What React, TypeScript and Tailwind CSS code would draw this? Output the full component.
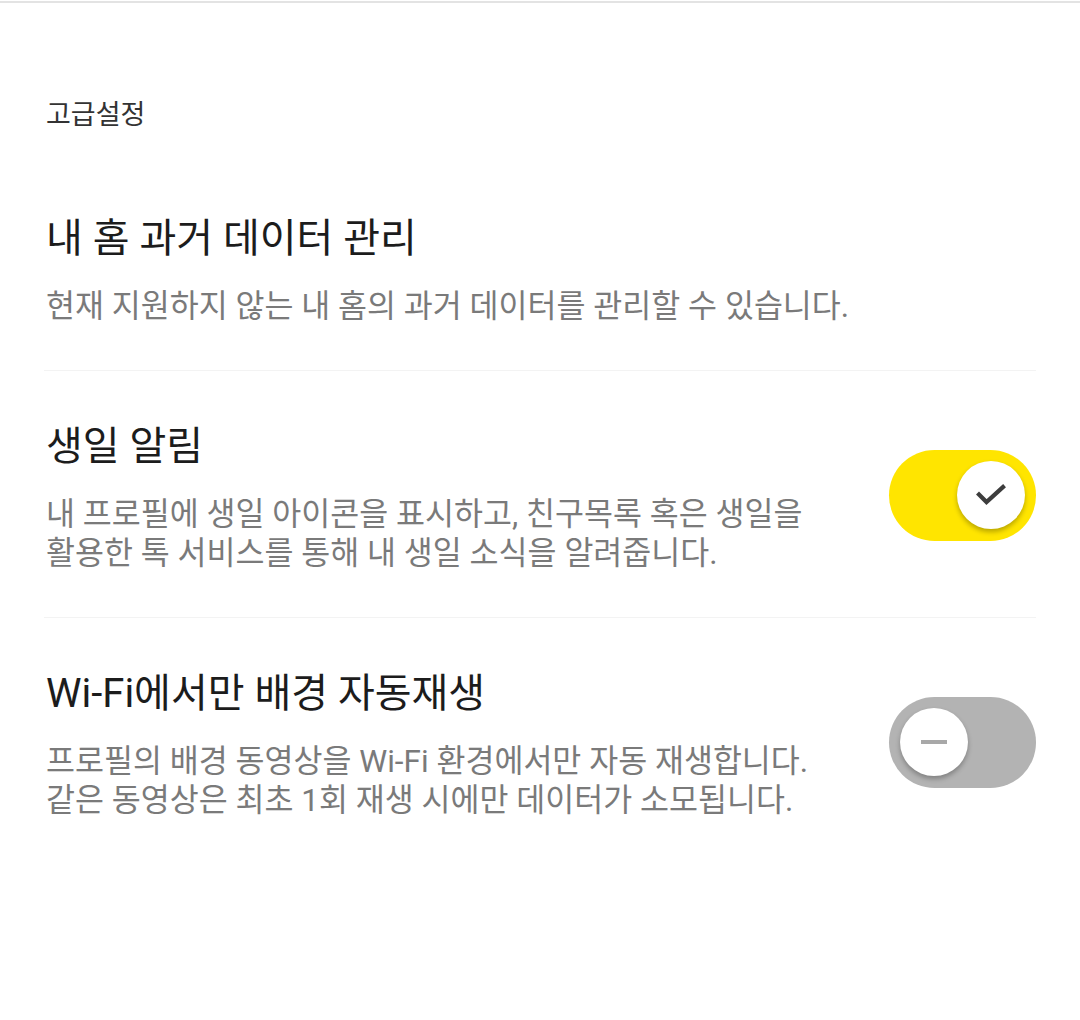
import React, { useState } from 'react';

const font = { fontFamily: '"Roboto", "Noto Sans CJK KR", sans-serif' };

interface ToggleProps {
  on: boolean;
  onChange: () => void;
}

const Toggle: React.FC<ToggleProps> = ({ on, onChange }) => (
  <button
    onClick={onChange}
    className={`relative shrink-0 w-[147px] h-[91px] rounded-full flex items-center px-[11px] mb-[8px] ${
      on ? 'bg-[#ffe500] justify-end' : 'bg-[#b3b3b3] justify-start'
    }`}
  >
    <span className="w-[68px] h-[68px] rounded-full bg-white shadow-[0_3px_5px_rgba(0,0,0,0.28)] flex items-center justify-center">
      {on ? (
        <svg width="30" height="22" viewBox="0 0 30 22" fill="none">
          <path d="M3 10.5 L10.5 18 L27 3" stroke="#3d3d3d" strokeWidth="4.2" strokeLinecap="square" />
        </svg>
      ) : (
        <span className="block w-[26px] h-[4px] bg-[#a8a8a8]" />
      )}
    </span>
  </button>
);

interface ItemProps {
  title: string;
  lines: string[];
  toggle?: { on: boolean; onChange: () => void };
  divider?: boolean;
  first?: boolean;
}

const Item: React.FC<ItemProps> = ({ title, lines, toggle, divider, first }) => (
  <div className={`mx-[44px] ${divider ? 'border-b border-[#f3f3f3]' : ''}`}>
    <div className={`flex items-center justify-between pl-[2px] pb-[44px] ${first ? 'pt-0' : 'pt-[54px]'}`}>
      <div className="flex flex-col">
        <div className="text-[40px] leading-[44px] text-[#1c1c1c] whitespace-nowrap">{title}</div>
        <div className="mt-[26px] text-[31.5px] leading-[39px] text-[#7a7a7a]">
          {lines.map((l) => (
            <div key={l} className="whitespace-nowrap">{l}</div>
          ))}
        </div>
      </div>
      {toggle && <Toggle on={toggle.on} onChange={toggle.onChange} />}
    </div>
  </div>
);

export default function App() {
  const [birthday, setBirthday] = useState(true);
  const [wifi, setWifi] = useState(false);

  return (
    <div className="w-[1080px] min-h-[1020px] bg-white pt-[1px]" style={font}>
      <div className="h-[2px] bg-[#e3e3e3]" />
      <div className="px-[46px] pt-[94px] pb-[84px] text-[27px] leading-[36px] text-[#333333]">고급설정</div>

      <Item
        first
        divider
        title="내 홈 과거 데이터 관리"
        lines={['현재 지원하지 않는 내 홈의 과거 데이터를 관리할 수 있습니다.']}
      />
      <Item
        divider
        title="생일 알림"
        lines={['내 프로필에 생일 아이콘을 표시하고, 친구목록 혹은 생일을', '활용한 톡 서비스를 통해 내 생일 소식을 알려줍니다.']}
        toggle={{ on: birthday, onChange: () => setBirthday(!birthday) }}
      />
      <Item
        title="Wi-Fi에서만 배경 자동재생"
        lines={['프로필의 배경 동영상을 Wi-Fi 환경에서만 자동 재생합니다.', '같은 동영상은 최초 1회 재생 시에만 데이터가 소모됩니다.']}
        toggle={{ on: wifi, onChange: () => setWifi(!wifi) }}
      />
    </div>
  );
}
